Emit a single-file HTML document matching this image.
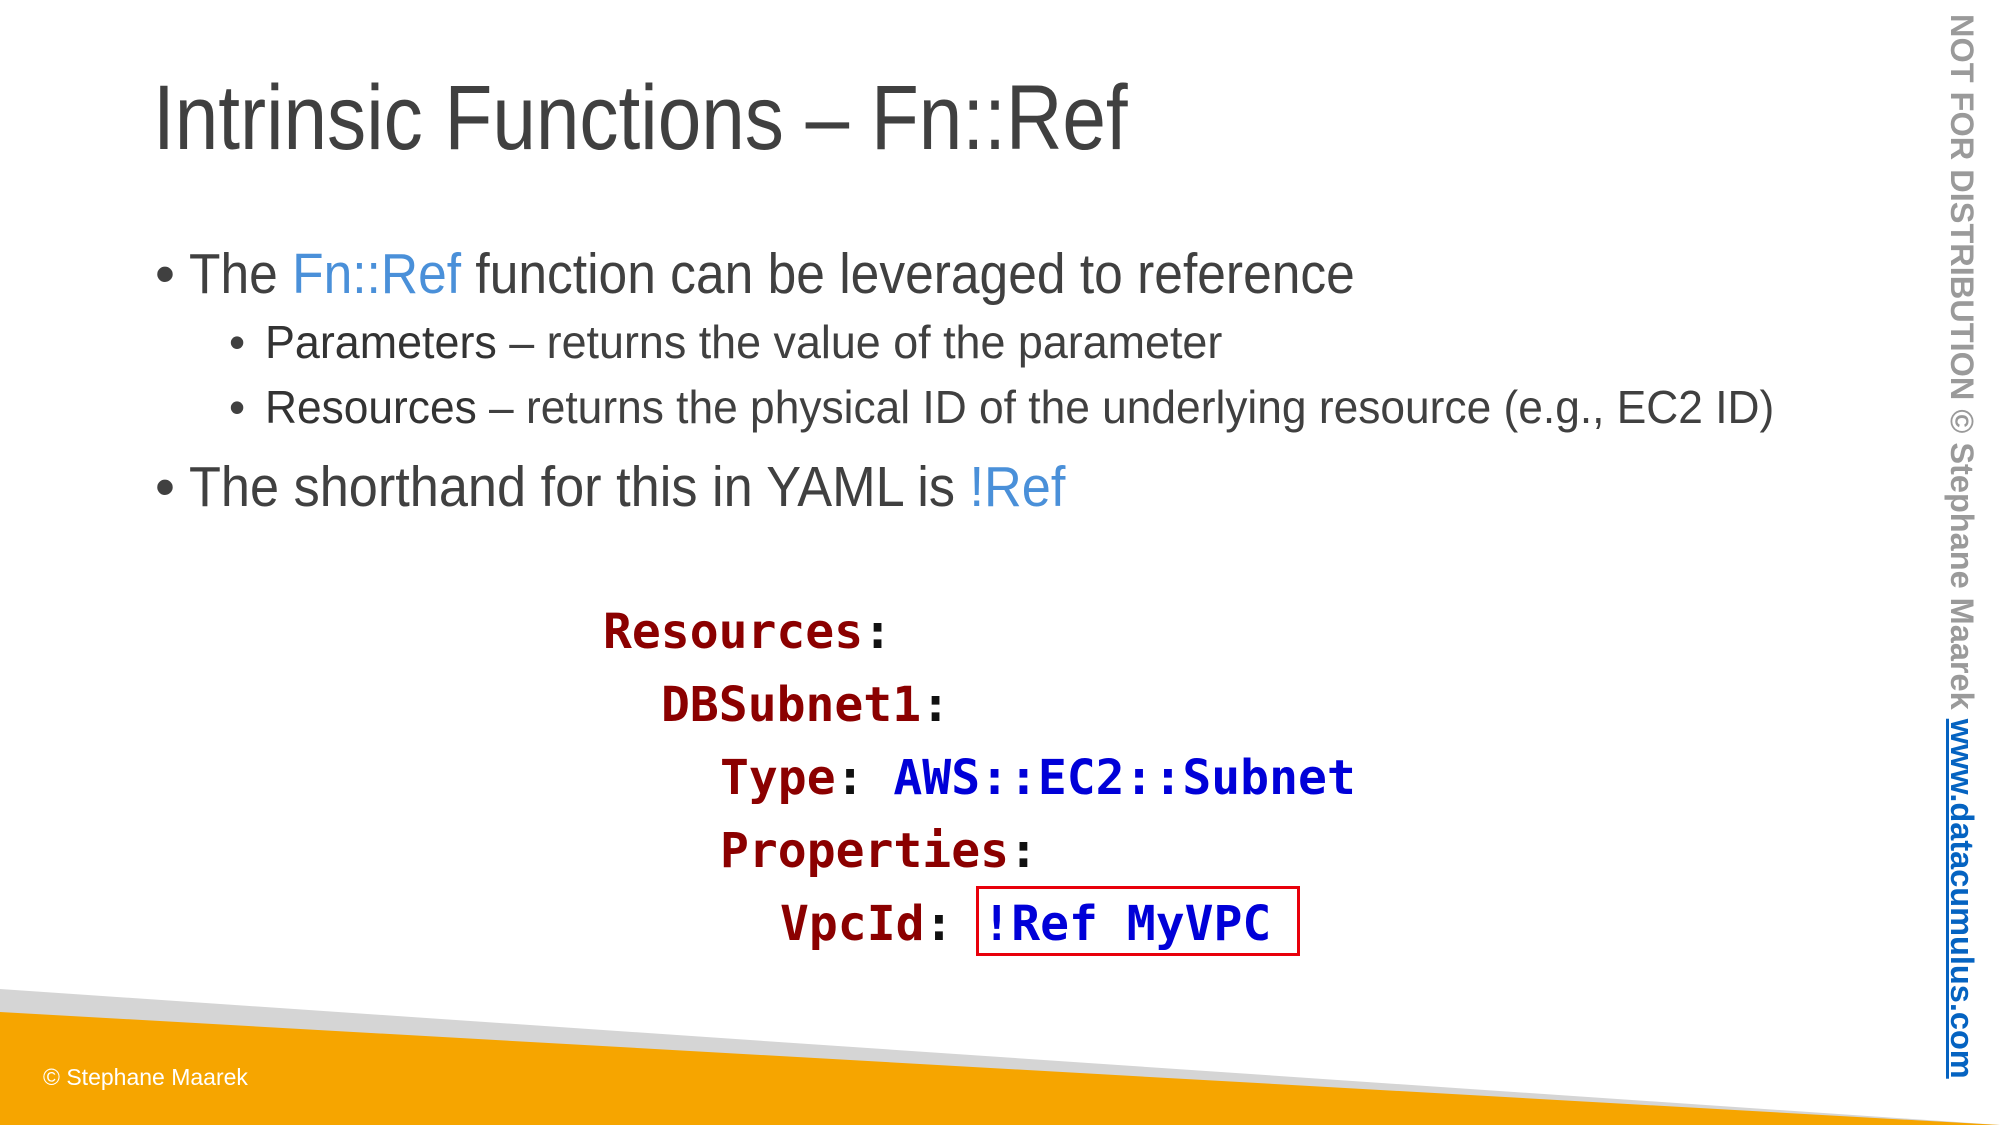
<!DOCTYPE html>
<html><head><meta charset="utf-8"><style>
html,body{margin:0;padding:0;width:2000px;height:1125px;overflow:hidden;background:#fff;position:relative}
.t{position:absolute;white-space:nowrap;font-family:"Liberation Sans",sans-serif;color:#404040;transform-origin:0 100%;line-height:1}
.b{color:#4a90d9}
.code{position:absolute;white-space:pre;font-family:"DejaVu Sans Mono","Liberation Mono",monospace;font-weight:bold;font-size:48px;line-height:1;color:#111}
.r{color:#8b0000}.u{color:#0000d8}
</style></head><body>
<svg style="position:absolute;left:0;top:0" width="2000" height="1125">
<polygon points="0,989 2000,1125 0,1125" fill="#d5d5d5"/>
<polygon points="0,1012 2000,1125 0,1125" fill="#f6a500"/>
</svg>
<div class="t" style="left:153px;top:72px;font-size:92px;transform:scaleX(0.851)">Intrinsic Functions – Fn::Ref</div>
<div class="t" style="left:155px;top:246px;font-size:57px;">•</div>
<div class="t" style="left:189px;top:246px;font-size:57px;transform:scaleX(0.904)">The <span class="b">Fn::Ref</span> function can be leveraged to reference</div>
<div class="t" style="left:229px;top:319px;font-size:46px;">•</div>
<div class="t" style="left:265px;top:319px;font-size:46px;transform:scaleX(0.975)"><span style="color:#333">Parameters</span> – returns the value of the parameter</div>
<div class="t" style="left:229px;top:384px;font-size:46px;">•</div>
<div class="t" style="left:265px;top:384px;font-size:46px;transform:scaleX(0.963)"><span style="color:#333">Resources</span> – returns the physical ID of the underlying resource (e.g., EC2 ID)</div>
<div class="t" style="left:155px;top:459px;font-size:57px;">•</div>
<div class="t" style="left:189px;top:459px;font-size:57px;transform:scaleX(0.917)">The shorthand for this in YAML is <span class="b">!Ref</span></div>

<div class="code" style="left:603px;top:608px"><span class="r">Resources</span>:</div>
<div class="code" style="left:661px;top:681px"><span class="r">DBSubnet1</span>:</div>
<div class="code" style="left:720px;top:754px"><span class="r">Type</span>: <span class="u">AWS::EC2::Subnet</span></div>
<div class="code" style="left:720px;top:827px"><span class="r">Properties</span>:</div>
<div class="code" style="left:780px;top:900px"><span class="r">VpcId</span>: <span class="u">!Ref MyVPC</span></div>
<div style="position:absolute;left:976px;top:886px;width:318px;height:64px;border:3px solid #e8000b"></div>

<div class="t" style="left:43px;top:1066px;font-size:23px;color:#fff;">© Stephane Maarek</div>

<div style="position:absolute;left:1978px;top:14px;transform:rotate(90deg);transform-origin:0 0;white-space:nowrap;font-family:'Liberation Sans Narrow','Liberation Sans',sans-serif;font-weight:bold;font-size:32.5px;line-height:1;color:#9a9a9a">NOT FOR DISTRIBUTION © Stephane Maarek <span style="color:#0563c1;text-decoration:underline">www.datacumulus.com</span></div>
</body></html>
